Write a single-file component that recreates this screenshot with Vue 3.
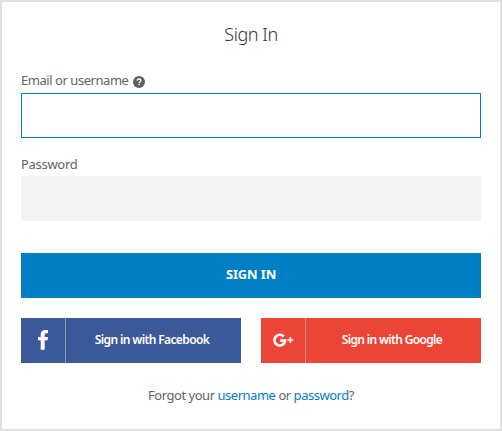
<script setup>
import { ref } from 'vue'

const email = ref('')
const password = ref('')
</script>

<template>
  <form class="card" @submit.prevent>
    <h1 class="title"><span>Sign In</span></h1>

    <label class="label" for="email">
      <span class="email-text">Email or username</span>
      <svg class="help" viewBox="0 0 12 12" aria-hidden="true">
        <circle cx="6" cy="6" r="6" fill="#606060" />
        <path d="M4.2 4.8C4.2 3.6 5 3 6 3s1.9.6 1.9 1.6C7.9 5.8 6.2 5.8 6.2 7" fill="none" stroke="#fff" stroke-width="1.3" />
        <rect x="5.5" y="7.8" width="1.4" height="1.3" fill="#fff" />
      </svg>
    </label>
    <input id="email" v-model="email" class="field active" type="text" />

    <label class="label second" for="password"><span class="password-text">Password</span></label>
    <input id="password" v-model="password" class="field" type="password" />

    <button class="submit" type="submit"><span>SIGN IN</span></button>

    <div class="socials">
      <button class="social facebook" type="button">
        <span class="icon">
          <svg width="10" height="20" viewBox="0 0 10 20" aria-hidden="true">
            <path d="M2.7 19.7V10.3H0V7h2.7V4.6C2.7 1.5 4.4 0 7.2 0H10v3.2H8.3C7 3.2 6.7 3.8 6.7 4.9V7H10l-.5 3.3H6.7v9.4z" fill="#fff" />
          </svg>
        </span>
        <span class="social-label facebook-label"><span>Sign in with Facebook</span></span>
      </button>
      <button class="social google" type="button">
        <span class="icon">
          <svg width="20" height="14" viewBox="0 0 20 14" aria-hidden="true">
            <path d="M10.7 3.5A5.4 5.4 0 1 0 12.1 7.6H7.2" fill="none" stroke="#fff" stroke-width="2.6" />
            <path d="M17.4 4v6M14.4 7h6" fill="none" stroke="#fff" stroke-width="1.7" />
          </svg>
        </span>
        <span class="social-label google-label"><span>Sign in with Google</span></span>
      </button>
    </div>

    <p class="forgot"><span>Forgot your <a>username</a> or <a>password</a>?</span></p>
  </form>
</template>

<style>
body {
  margin: 0;
  background: #fff;
}
</style>

<style scoped>
.card {
  box-sizing: border-box;
  width: 502px;
  height: 431px;
  padding: 20px 19px 0;
  border: 2px solid #e0e0e0;
  background: #fff;
  color: #636363;
  font-family: "Noto Sans", "Open Sans", sans-serif;
  font-size: 13px;
  display: flex;
  flex-direction: column;
}
.title {
  margin: 0;
  height: 48px;
  line-height: 24px;
  text-align: center;
  font-size: 18px;
  font-weight: 300;
  letter-spacing: -0.45px;
  color: #333;
}
.label {
  display: flex;
  align-items: center;
  gap: 4px;
  height: 23px;
  line-height: 21px;
  letter-spacing: -0.45px;
}
.label span {
  height: 23px;
}
.help {
  width: 12px;
  height: 12px;
  margin-top: 1px;
}
.second {
  margin-top: 15px;
  line-height: 23px;
  letter-spacing: -0.3px;
}
.field {
  box-sizing: border-box;
  width: 100%;
  height: 45px;
  flex: none;
  margin: 0;
  padding: 0 12px;
  border: 0;
  border-radius: 0;
  outline: none;
  background: #f3f3f3;
  font: inherit;
}
.active {
  border: 1px solid #007fc4;
  background: #fff;
}
button {
  margin: 0;
  padding: 0;
  border: 0;
  color: #fff;
  font-family: inherit;
}
.submit {
  height: 45px;
  flex: none;
  margin-top: 32px;
  padding-bottom: 2px;
  background: #007fc4;
  font-size: 13px;
  font-weight: 700;
  line-height: 43px;
  letter-spacing: -0.15px;
}
.socials {
  display: grid;
  grid-template-columns: 1fr 1fr;
  gap: 20px;
  margin-top: 20px;
}
.social {
  display: flex;
  height: 45px;
  font-size: 12px;
  font-weight: 600;
  letter-spacing: -0.62px;
}
.facebook {
  background: #3b5998;
}
.google {
  background: #ec4436;
}
.icon {
  box-sizing: border-box;
  width: 45px;
  height: 45px;
  display: flex;
  align-items: center;
  justify-content: center;
  padding-bottom: 1px;
  border-right: 1px solid rgba(255, 255, 255, 0.4);
}
.icon svg {
  overflow: visible;
}
.social-label {
  flex: 1;
  text-align: center;
  line-height: 44px;
}
.facebook-label span {
  padding-right: 3px;
}
.google-label {
  letter-spacing: -0.66px;
}
.google-label span {
  padding-right: 3px;
}
.forgot {
  margin: 22px 0 0;
  text-align: center;
  line-height: 20px;
  letter-spacing: -0.47px;
}
.forgot a {
  color: #007fc4;
}
</style>
